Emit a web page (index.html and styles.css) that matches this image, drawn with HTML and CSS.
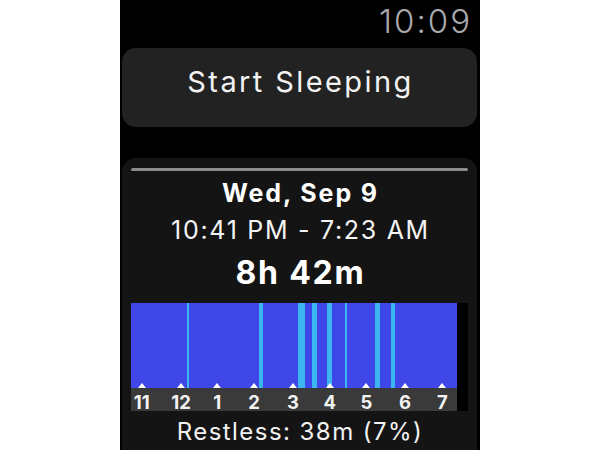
FILE: index.html
```html
<!DOCTYPE html>
<html>
<head>
<meta charset="utf-8">
<link rel="stylesheet" href="styles.css">
</head>
<body>
<div class="screen">
  <div class="status"><span class="clock">10:09</span></div>
  <div class="start">Start Sleeping</div>
  <div class="card">
    <div class="handle"></div>
    <div class="date">Wed, Sep 9</div>
    <div class="range">10:41 PM - 7:23 AM</div>
    <div class="duration">8h 42m</div>
    <div class="chart">
      <div class="plot">
        <div class="sleep">
          <span class="wake" style="left:56px;width:2px"></span>
          <span class="wake" style="left:128px;width:4px"></span>
          <span class="wake" style="left:167px;width:7px"></span>
          <span class="wake" style="left:181px;width:5px"></span>
          <span class="wake" style="left:196px;width:5px"></span>
          <span class="wake" style="left:214px;width:2px"></span>
          <span class="wake" style="left:244px;width:5px"></span>
          <span class="wake" style="left:260px;width:4px"></span>
          <span class="tick" style="left:10.7px"></span>
          <span class="tick" style="left:50px"></span>
          <span class="tick" style="left:86.3px"></span>
          <span class="tick" style="left:123px"></span>
          <span class="tick" style="left:162px"></span>
          <span class="tick" style="left:198.7px"></span>
          <span class="tick" style="left:235.3px"></span>
          <span class="tick" style="left:274px"></span>
          <span class="tick" style="left:311.3px"></span>
        </div>
        <div class="axis">
          <span class="hour" style="left:10.7px">11</span>
          <span class="hour" style="left:50px">12</span>
          <span class="hour" style="left:86.3px">1</span>
          <span class="hour" style="left:123px">2</span>
          <span class="hour" style="left:162px">3</span>
          <span class="hour" style="left:198.7px">4</span>
          <span class="hour" style="left:235.3px">5</span>
          <span class="hour" style="left:274px">6</span>
          <span class="hour" style="left:311.3px">7</span>
        </div>
      </div>
      <div class="edge"></div>
    </div>
    <div class="restless">Restless: 38m (7%)</div>
  </div>
</div>
</body>
</html>
```
FILE: styles.css
```css
html, body {
  margin: 0;
  padding: 0;
  background: #ffffff;
}
body {
  display: flex;
  justify-content: center;
  font-family: Inter, "Liberation Sans", sans-serif;
}
.screen {
  width: 360px;
  height: 450px;
  overflow: hidden;
  background: #000;
  padding: 0 3px 0 2px;
  box-sizing: border-box;
  display: flex;
  flex-direction: column;
}
.status {
  height: 48px;
  text-align: right;
  padding-right: 5px;
  flex: none;
}
.clock {
  font-size: 33px;
  line-height: 42px;
  font-weight: 300;
  color: #a9a9ae;
  letter-spacing: 2px;
}
.start {
  flex: none;
  height: 79px;
  box-sizing: border-box;
  padding: 0 0 12px 2px;
  line-height: 67px;
  border-radius: 14px;
  background: #222222;
  color: #f2f2f2;
  font-size: 29px;
  text-align: center;
  letter-spacing: 2.4px;
}
.card {
  flex: none;
  margin-top: 31px;
  background: #141414;
  border-radius: 14px;
  padding: 10px 9px 20px 9px;
  color: #fff;
  text-align: center;
}
.handle {
  height: 3px;
  border-radius: 2px;
  background: #8c8c8c;
  margin-bottom: 4px;
}
.date {
  font-size: 25px;
  font-weight: 700;
  line-height: 37px;
  letter-spacing: 1.9px;
  padding-left: 2px;
}
.range {
  font-size: 25px;
  line-height: 37px;
  color: #f4f4f4;
  letter-spacing: 1.7px;
  padding-left: 2px;
}
.duration {
  font-size: 32px;
  font-weight: 700;
  line-height: 48px;
  margin-bottom: 6px;
  letter-spacing: 1.8px;
  padding-left: 2px;
}
.chart {
  display: flex;
  height: 108px;
}
.plot {
  width: 326px;
  display: flex;
  flex-direction: column;
}
.edge {
  flex: 1;
  background: #000;
}
.sleep {
  position: relative;
  height: 85px;
  background: #3f47e9;
}
.wake {
  position: absolute;
  top: 0;
  bottom: 0;
  background: #3cb6f0;
}
.tick {
  position: absolute;
  bottom: 0;
  width: 0;
  height: 0;
  margin-left: -4px;
  border-left: 4px solid transparent;
  border-right: 4px solid transparent;
  border-bottom: 5px solid #ffffff;
}
.axis {
  position: relative;
  height: 23px;
  background: #3a3a3a;
}
.hour {
  position: absolute;
  top: 0;
  width: 30px;
  margin-left: -15px;
  text-align: center;
  font-size: 18.5px;
  font-weight: 700;
  line-height: 28px;
  color: #f2f2f2;
}
.restless {
  font-size: 24px;
  line-height: 30px;
  margin-top: 6px;
  color: #f2f2f2;
  letter-spacing: 1.45px;
  padding-left: 1px;
}
```
